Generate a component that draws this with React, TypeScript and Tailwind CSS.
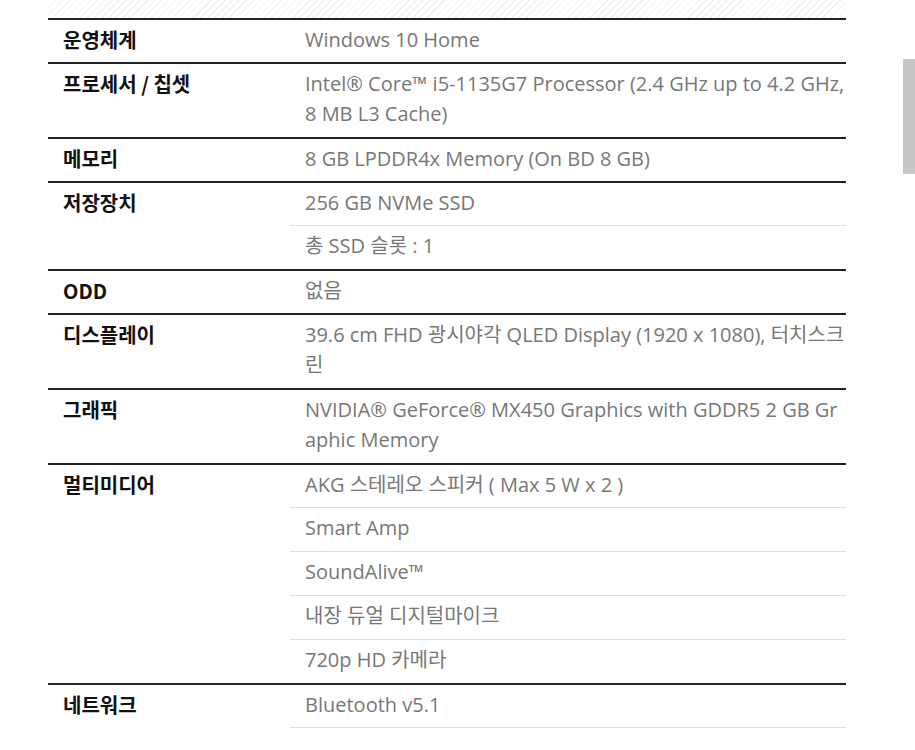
const specs: { label: string; values: string[][] }[] = [
  { label: "운영체계", values: [["Windows 10 Home"]] },
  {
    label: "프로세서 / 칩셋",
    values: [["Intel® Core™ i5-1135G7 Processor (2.4 GHz up to 4.2 GHz,", "8 MB L3 Cache)"]],
  },
  { label: "메모리", values: [["8 GB LPDDR4x Memory (On BD 8 GB)"]] },
  { label: "저장장치", values: [["256 GB NVMe SSD"], ["총 SSD 슬롯 : 1"]] },
  { label: "ODD", values: [["없음"]] },
  {
    label: "디스플레이",
    values: [["39.6 cm FHD 광시야각 QLED Display (1920 x 1080), 터치스크", "린"]],
  },
  {
    label: "그래픽",
    values: [["NVIDIA® GeForce® MX450 Graphics with GDDR5 2 GB Gr", "aphic Memory"]],
  },
  {
    label: "멀티미디어",
    values: [
      ["AKG 스테레오 스피커 ( Max 5 W x 2 )"],
      ["Smart Amp"],
      ["SoundAlive™"],
      ["내장 듀얼 디지털마이크"],
      ["720p HD 카메라"],
    ],
  },
  { label: "네트워크", values: [["Bluetooth v5.1"], []] },
]

function SpecRow({ label, values }: { label: string; values: string[][] }) {
  return (
    <div className="flex border-t-2 border-[#222]">
      <div className="w-[242px] shrink-0 pl-[15px] pt-[5px] text-[20px] leading-[30px] font-bold text-[#111] font-['Noto_Sans_CJK_KR',sans-serif]">
        {label}
      </div>
      <div className="flex-1">
        {values.map((lines, i) => (
          <div
            key={i}
            className={
              "pl-[15px] pt-[5px] text-[20px] leading-[30px] text-[#777] whitespace-nowrap font-['Open_Sans','Noto_Sans_CJK_KR',sans-serif] " +
              (i > 0 ? "pb-[8px] border-t border-[#dcdcdc]" : lines.length > 1 ? "pb-[8px]" : "pb-[7px]")
            }
          >
            {lines.map((l, j) => (
              <div key={j}>{l}</div>
            ))}
          </div>
        ))}
      </div>
    </div>
  )
}

export default function App() {
  return (
    <div className="relative w-[915px] h-[750px] overflow-hidden bg-white">
      <div className="ml-[48px] w-[798px]">
        <div className="h-[18px] bg-[repeating-linear-gradient(135deg,#efefef_0px,#efefef_1px,#ffffff_1px,#ffffff_5px)]" />
        {specs.map((s) => (
          <SpecRow key={s.label} label={s.label} values={s.values} />
        ))}
      </div>
      <div className="absolute left-[903px] top-[59px] w-[12px] h-[115px] bg-[#c6c6c6]" />
    </div>
  )
}
